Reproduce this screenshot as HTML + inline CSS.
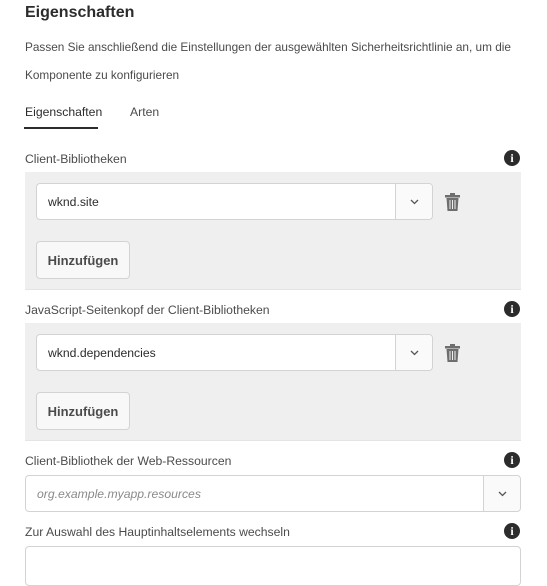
<!DOCTYPE html>
<html><head><meta charset="utf-8"><style>
*{box-sizing:border-box;margin:0;padding:0}
body{width:547px;height:571px;overflow:hidden;background:#fff;font-family:"Liberation Sans",sans-serif;color:#4b4b4b;position:relative}
.a{position:absolute}
h1{position:absolute;left:25px;top:4px;font-size:16px;font-weight:bold;color:#2c2c2c}
.t{font-size:12.2px;color:#4b4b4b;white-space:nowrap}
.info{position:absolute;width:16px;height:16px;border-radius:50%;background:#2c2c2c;color:#fff;font:bold 12px/16px "Liberation Serif",serif;text-align:center}
.panel{position:absolute;left:25px;width:496px;background:#efefef;border-bottom:1px solid #e4e4e4}
.inp{position:absolute;background:#fff;border:1px solid #d3d3d3;border-radius:4px;height:37px;font-size:12.2px;line-height:36px;padding-left:11px;color:#2c2c2c}
.dd{position:absolute;right:0;top:0;width:37px;height:35px;border-left:1px solid #d3d3d3;background:#fafafa;border-radius:0 4px 4px 0}
.dd svg{position:absolute;left:14px;top:15px}
.btn{position:absolute;left:11px;width:94px;height:38px;border:1px solid #d3d3d3;border-radius:4px;background:#f8f8f8;font-weight:bold;font-size:13px;color:#4b4b4b;line-height:37px;text-align:center}
.trash{position:absolute}
</style></head><body>
<h1>Eigenschaften</h1>
<div class="a t" style="left:25px;top:40px;font-size:11.8px">Passen Sie anschließend die Einstellungen der ausgewählten Sicherheitsrichtlinie an, um die</div>
<div class="a t" style="left:25px;top:68px;font-size:11.8px">Komponente zu konfigurieren</div>
<div class="a t" style="left:25px;top:105px;color:#2c2c2c">Eigenschaften</div>
<div class="a t" style="left:130px;top:105px">Arten</div>
<div class="a" style="left:24px;top:127px;width:74px;height:2px;background:#2c2c2c"></div>

<div class="a t" style="left:25px;top:152px">Client-Bibliotheken</div>
<div class="info" style="left:504px;top:150px">i</div>
<div class="panel" style="top:172px;height:118px">
 <div class="inp" style="left:11px;top:11px;width:397px">wknd.site<div class="dd"><svg width="9" height="6"><path d="M1 1l3.5 3.5L8 1" stroke="#555" stroke-width="1.3" fill="none"/></svg></div></div>
 <svg class="trash" style="left:420px;top:21px" width="15" height="18" viewBox="0 0 15 18"><rect x="0" y="2" width="15" height="2.5" fill="#6e6e6e"/><rect x="5" y="0" width="5" height="2.5" fill="#6e6e6e"/><path d="M1.5 5h12l-1 13h-10z" fill="#6e6e6e"/><path d="M5 7v9M7.5 7v9M10 7v9" stroke="#efefef" stroke-width="1"/></svg>
 <div class="btn" style="top:69px">Hinzufügen</div>
</div>

<div class="a t" style="left:25px;top:303px">JavaScript-Seitenkopf der Client-Bibliotheken</div>
<div class="info" style="left:504px;top:301px">i</div>
<div class="panel" style="top:323px;height:118px">
 <div class="inp" style="left:11px;top:11px;width:397px">wknd.dependencies<div class="dd"><svg width="9" height="6"><path d="M1 1l3.5 3.5L8 1" stroke="#555" stroke-width="1.3" fill="none"/></svg></div></div>
 <svg class="trash" style="left:420px;top:21px" width="15" height="18" viewBox="0 0 15 18"><rect x="0" y="2" width="15" height="2.5" fill="#6e6e6e"/><rect x="5" y="0" width="5" height="2.5" fill="#6e6e6e"/><path d="M1.5 5h12l-1 13h-10z" fill="#6e6e6e"/><path d="M5 7v9M7.5 7v9M10 7v9" stroke="#efefef" stroke-width="1"/></svg>
 <div class="btn" style="top:69px">Hinzufügen</div>
</div>

<div class="a t" style="left:25px;top:454px">Client-Bibliothek der Web-Ressourcen</div>
<div class="info" style="left:504px;top:452px">i</div>
<div class="inp" style="left:25px;top:475px;width:496px;color:#8a8a8a;font-style:italic">org.example.myapp.resources<div class="dd"><svg width="9" height="6"><path d="M1 1l3.5 3.5L8 1" stroke="#555" stroke-width="1.3" fill="none"/></svg></div></div>

<div class="a t" style="left:25px;top:525px">Zur Auswahl des Hauptinhaltselements wechseln</div>
<div class="info" style="left:504px;top:523px">i</div>
<div class="inp" style="left:25px;top:546px;width:496px;height:40px"></div>
</body></html>
